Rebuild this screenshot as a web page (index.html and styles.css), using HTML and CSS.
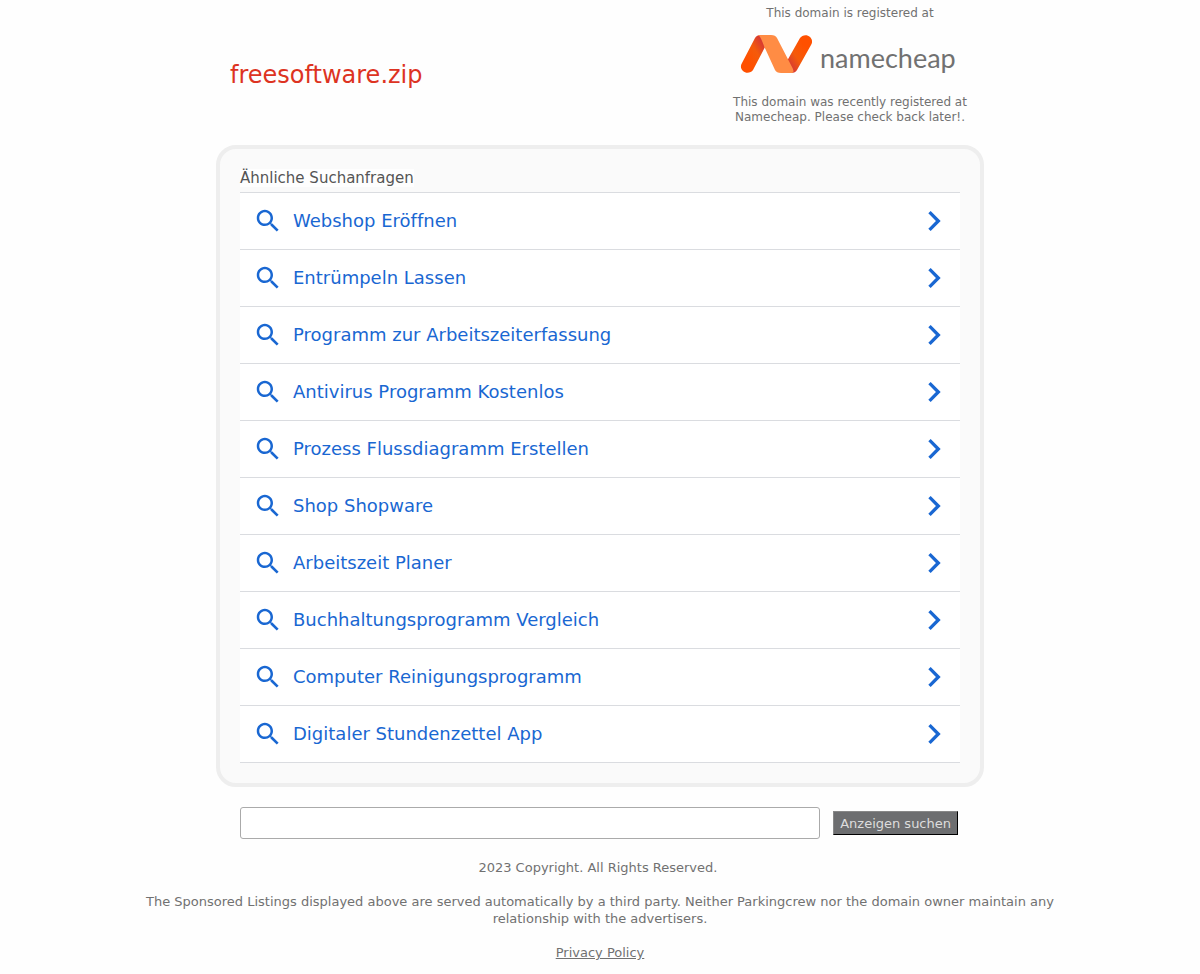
FILE: index.html
```html
<!DOCTYPE html>
<html lang="de">
<head>
<meta charset="utf-8">
<meta name="viewport" content="width=device-width, initial-scale=1">
<title>freesoftware.zip</title>
<link rel="stylesheet" href="styles.css">
</head>
<body>
<svg class="sprite" aria-hidden="true">
  <symbol id="search" viewBox="0 0 24 24"><path d="M15.5 14h-.79l-.28-.27C15.41 12.59 16 11.11 16 9.5 16 5.91 13.09 3 9.5 3S3 5.91 3 9.5 5.91 16 9.5 16c1.61 0 3.09-.59 4.23-1.57l.27.28v.79l5 4.99L20.49 19l-4.99-5zm-6 0C7.01 14 5 11.99 5 9.5S7.01 5 9.5 5 14 7.01 14 9.5 11.99 14 9.5 14z"/></symbol>
  <symbol id="chevron" viewBox="0 0 24 24"><path d="M10 6L8.59 7.41 13.17 12l-4.58 4.59L10 18l6-6z"/></symbol>
</svg>
<header class="header">
  <h1 class="domain">freesoftware.zip</h1>
  <div class="registrar">
    <p class="registrar-text">This domain is registered at</p>
    <a class="logo" href="#" aria-label="namecheap">
      <svg class="logo-mark" viewBox="0 0 72 40" aria-hidden="true">
        <defs>
          <linearGradient id="left" x1="0" y1="1" x2="1" y2="0"><stop offset=".3" stop-color="#ff5000"/><stop offset=".6" stop-color="#f45b0b"/><stop offset=".9" stop-color="#d1333a"/></linearGradient>
          <linearGradient id="right" x1="1" y1="0" x2="0" y2="1"><stop offset=".3" stop-color="#ff5000"/><stop offset=".6" stop-color="#f45b0b"/><stop offset=".9" stop-color="#d1333a"/></linearGradient>
        </defs>
        <path fill="url(#left)" d="M21 1c-3 0-5 1-6 3L2 29c-2 3-1 6 1 8 3 3 8 2 10-1l12-23z"/>
        <path fill="url(#right)" d="M51 39c3 0 5-1 6-3l14-25c2-3 1-6-1-8-3-3-8-2-10 1L47 27z"/>
        <path fill="#ff8c44" d="M18 1h13c3 0 5 1 6 3l15 29c2 4 2 5 0 6H41c-3 0-5-1-6-3L24 12c-2-5-3-9-6-11z"/>
      </svg>
      <span class="logo-name">namecheap</span>
    </a>
    <p class="registrar-text">This domain was recently registered at Namecheap. Please check back later!.</p>
  </div>
</header>
<main class="main">
  <section class="panel">
    <h2 class="panel-title">Ähnliche Suchanfragen</h2>
    <ul class="results">
      <li><a class="result" href="#"><svg class="icon-search"><use href="#search"/></svg><span class="label">Webshop Eröffnen</span><svg class="icon-chevron"><use href="#chevron"/></svg></a></li>
      <li><a class="result" href="#"><svg class="icon-search"><use href="#search"/></svg><span class="label">Entrümpeln Lassen</span><svg class="icon-chevron"><use href="#chevron"/></svg></a></li>
      <li><a class="result" href="#"><svg class="icon-search"><use href="#search"/></svg><span class="label">Programm zur Arbeitszeiterfassung</span><svg class="icon-chevron"><use href="#chevron"/></svg></a></li>
      <li><a class="result" href="#"><svg class="icon-search"><use href="#search"/></svg><span class="label">Antivirus Programm Kostenlos</span><svg class="icon-chevron"><use href="#chevron"/></svg></a></li>
      <li><a class="result" href="#"><svg class="icon-search"><use href="#search"/></svg><span class="label">Prozess Flussdiagramm Erstellen</span><svg class="icon-chevron"><use href="#chevron"/></svg></a></li>
      <li><a class="result" href="#"><svg class="icon-search"><use href="#search"/></svg><span class="label">Shop Shopware</span><svg class="icon-chevron"><use href="#chevron"/></svg></a></li>
      <li><a class="result" href="#"><svg class="icon-search"><use href="#search"/></svg><span class="label">Arbeitszeit Planer</span><svg class="icon-chevron"><use href="#chevron"/></svg></a></li>
      <li><a class="result" href="#"><svg class="icon-search"><use href="#search"/></svg><span class="label">Buchhaltungsprogramm Vergleich</span><svg class="icon-chevron"><use href="#chevron"/></svg></a></li>
      <li><a class="result" href="#"><svg class="icon-search"><use href="#search"/></svg><span class="label">Computer Reinigungsprogramm</span><svg class="icon-chevron"><use href="#chevron"/></svg></a></li>
      <li><a class="result" href="#"><svg class="icon-search"><use href="#search"/></svg><span class="label">Digitaler Stundenzettel App</span><svg class="icon-chevron"><use href="#chevron"/></svg></a></li>
    </ul>
  </section>
  <form class="search">
    <input class="search-input" type="text" name="q" aria-label="Anzeigen suchen">
    <button class="search-button" type="submit">Anzeigen suchen</button>
  </form>
</main>
<footer class="footer">
  <p>2023 Copyright. All Rights Reserved.&nbsp;</p>
  <p>The Sponsored Listings displayed above are served automatically by a third party. Neither Parkingcrew nor the domain owner maintain any relationship with the advertisers.</p>
  <p><a class="policy" href="#">Privacy Policy</a></p>
</footer>
</body>
</html>
```

FILE: styles.css
```css
* {
  box-sizing: border-box;
}

body {
  margin: 0;
  background: #fefefe;
  color: #717171;
  font-family: "DejaVu Sans", Verdana, sans-serif;
  font-size: 13px;
  line-height: 17px;
  text-rendering: optimizeSpeed;
}

h1, h2, p, ul {
  margin: 0;
  padding: 0;
  font-weight: normal;
}

.sprite {
  display: none;
}

.header {
  display: flex;
  justify-content: space-between;
  max-width: 768px;
  margin: 0 auto;
  padding: 6px 4px 20px 14px;
}

.domain {
  padding-top: 55px;
  color: #dd3322;
  font-size: 24px;
  line-height: 28px;
}

.registrar {
  width: 260px;
  padding: 0 10px;
  text-align: center;
}

.registrar-text {
  font-size: 12px;
  line-height: 15px;
}

.logo {
  display: flex;
  gap: 8px;
  height: 74px;
  padding: 13px 0 0 10px;
  color: #717171;
  text-decoration: none;
}

.logo-mark {
  width: 72px;
  height: 40px;
}

.logo-name {
  padding-top: 6px;
  font-family: Lato, sans-serif;
  font-size: 27px;
  font-weight: 400;
  line-height: 36px;
}

.main {
  max-width: 768px;
  margin: 0 auto;
}

.panel {
  padding: 20px;
  border: 4px solid #eeeeee;
  border-radius: 20px;
  background: #fafafa;
}

.panel-title {
  width: fit-content;
  margin-bottom: 5px;
  background: #fefefe;
  color: #555555;
  font-size: 15px;
  line-height: 18px;
}

.results {
  border-top: 1px solid #dadce0;
  background: #ffffff;
  list-style: none;
}

.result {
  display: flex;
  align-items: center;
  height: 57px;
  padding: 0 6px 0 13px;
  border-bottom: 1px solid #dadce0;
  color: #1967d2;
  font-size: 18px;
  line-height: 22px;
  text-decoration: none;
}

.label {
  flex: 1;
  padding-left: 10px;
}

.icon-search {
  width: 30px;
  height: 30px;
  fill: currentColor;
}

.icon-chevron {
  width: 40px;
  height: 40px;
  fill: currentColor;
}

.search {
  display: flex;
  align-items: center;
  gap: 13px;
  padding: 20px 26px 20px 24px;
}

.search-input {
  flex: 1;
  min-width: 0;
  height: 32px;
  padding: 0 8px;
  border: 1px solid #aaaaaa;
  border-radius: 3px;
  background: #ffffff;
  font: inherit;
}

.search-button {
  height: 24px;
  padding: 0 6px;
  border: 1px solid;
  border-color: #888888 #000000 #000000 #888888;
  background: #6d6e70;
  color: #dddddd;
  font: inherit;
}

.footer {
  display: grid;
  gap: 17px;
  max-width: 960px;
  margin: 0 auto;
  padding-bottom: 13px;
  text-align: center;
}

.policy {
  color: inherit;
}
```
